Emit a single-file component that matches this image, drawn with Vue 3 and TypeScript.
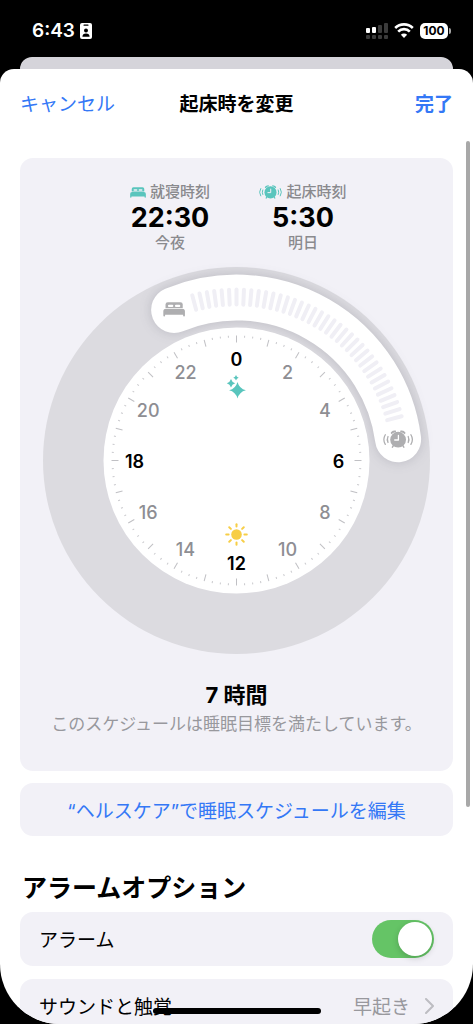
<script setup lang="ts">
import { ref } from 'vue'

interface Tick {
  angle: number
  major: boolean
}

interface HourLabel {
  text: string
  x: number
  y: number
  strong: boolean
}

interface SleepTime {
  icon: 'bed' | 'alarm'
  label: string
  time: string
  day: string
}

const alarmOn = ref(true)

const times: SleepTime[] = [
  { icon: 'bed', label: '就寝時刻', time: '22:30', day: '今夜' },
  { icon: 'alarm', label: '起床時刻', time: '5:30', day: '明日' },
]

const bandRadius = 163
const labelRadius = 102
const startHour = -1.5
const endHour = 5.5

function polar(hour: number, radius: number) {
  const rad = (hour / 24) * Math.PI * 2
  return { x: Math.sin(rad) * radius, y: -Math.cos(rad) * radius }
}

const start = polar(startHour, bandRadius)
const end = polar(endHour, bandRadius)
const bandPath = `M${start.x} ${start.y}A${bandRadius} ${bandRadius} 0 0 1 ${end.x} ${end.y}`

const ticks: Tick[] = Array.from({ length: 96 }, (_, i) => ({
  angle: i * 3.75,
  major: i % 4 === 0,
}))

const bandTicks: number[] = Array.from({ length: 37 }, (_, i) => -15 + i * 2.5)

const hours: HourLabel[] = Array.from({ length: 12 }, (_, i) => {
  const hour = i * 2
  return { text: String(hour), ...polar(hour, labelRadius), strong: hour % 6 === 0 }
})

const rays: number[] = [0, 45, 90, 135, 180, 225, 270, 315]
</script>

<template>
  <div class="screen">
    <svg class="defs" aria-hidden="true">
      <symbol id="bed" viewBox="0 0 22 15">
        <path
          fill="currentColor"
          d="M2.400 6.200V2.600Q2.400 .3 4.700 .3H17.300Q19.600 .3 19.600 2.600V6.200Z"
        />
        <path
          fill="var(--cut)"
          d="M5.900 2.900H9.100Q10.200 2.900 10.200 4Q10.200 5.100 9.100 5.100H5.900Q4.800 5.100 4.800 4Q4.800 2.900 5.900 2.900ZM12.900 2.900H16.100Q17.200 2.900 17.200 4Q17.200 5.100 16.100 5.100H12.900Q11.800 5.100 11.800 4Q11.800 2.900 12.900 2.900Z"
        />
        <path
          fill="currentColor"
          d="M2.800 6.900H19.200Q21.800 6.900 21.800 9.400V13.700Q21.800 14.600 20.900 14.600Q20 14.600 20 13.700V12.900H2V13.700Q2 14.600 1.100 14.600Q.2 14.600 .2 13.700V9.400Q.2 6.900 2.800 6.900Z"
        />
      </symbol>
      <symbol id="alarm" viewBox="0 0 30 18">
        <g fill="none" stroke="currentColor" stroke-linecap="round">
          <path stroke-width="1.900" d="M8.600 2.700Q9.900 1.100 12 1M21.400 2.700Q20.100 1.100 18 1" />
          <path stroke-width="1.500" d="M10.500 15.200L9.300 16.900M19.500 15.200L20.700 16.900" />
          <path stroke-width="1.300" d="M4.900 6.300Q3.500 9.300 4.900 12.300M25.100 6.300Q26.500 9.300 25.100 12.300" />
          <path stroke-width="1.300" d="M2.200 4.500Q-.8 9.300 2.200 14.100M27.800 4.500Q30.800 9.300 27.800 14.100" />
        </g>
        <circle cx="15" cy="9.500" r="7.900" fill="currentColor" />
        <path class="hands" d="M15.300 5.200V9.800H11.600" />
      </symbol>
    </svg>

    <header class="status">
      <span class="clock">6:43</span>
      <svg class="id" viewBox="0 0 12 16" aria-hidden="true">
        <rect width="12" height="16" rx="2" fill="#fff" />
        <rect x="3.5" y="1.6" width="5" height="1.1" rx=".5" fill="#000" />
        <circle cx="6" cy="7.6" r="2" fill="#000" />
        <path d="M2.4 13.8Q2.6 10.6 6 10.6T9.6 13.8Z" fill="#000" />
      </svg>
      <span class="spacer"></span>
      <svg class="signal" viewBox="0 0 22 16" aria-hidden="true">
        <g fill="#fff">
          <rect x="0" y="5" width="4" height="5" rx="1" />
          <rect x="6" y="4" width="4" height="6" rx="1" />
        </g>
        <g fill="#3b3b3b">
          <rect x="12" y="2" width="4" height="8" rx="1" />
          <rect x="18" y="0" width="4" height="10" rx="1" />
          <rect x="0" y="12" width="4" height="4" rx="1" />
          <rect x="6" y="12" width="4" height="4" rx="1" />
          <rect x="12" y="12" width="4" height="4" rx="1" />
          <rect x="18" y="12" width="4" height="4" rx="1" />
        </g>
      </svg>
      <svg class="wifi" viewBox="0 0 20 15" aria-hidden="true">
        <g fill="none" stroke="#fff" stroke-width="2.6">
          <path d="M1.200 5A12.600 12.600 0 0 1 18.800 5" />
          <path d="M4.200 8.600A8 8 0 0 1 15.800 8.600" />
        </g>
        <path fill="#fff" d="M10 15L6.900 11.800A4.400 4.400 0 0 1 13.100 11.800Z" />
      </svg>
      <span class="battery">100</span>
    </header>

    <div class="back-sheet"></div>

    <main class="sheet">
      <nav class="bar">
        <button class="link cancel" type="button">キャンセル</button>
        <h1>起床時を変更</h1>
        <button class="link done" type="button">完了</button>
      </nav>

      <section class="card schedule">
        <div class="times">
          <div v-for="t in times" :key="t.label" class="time">
            <div class="label">
              <svg :class="t.icon" aria-hidden="true"><use :href="'#' + t.icon" /></svg>
              <span>{{ t.label }}</span>
            </div>
            <strong>{{ t.time }}</strong>
            <span class="day">{{ t.day }}</span>
          </div>
        </div>

        <svg class="dial" viewBox="-193.5 -193.5 387 387" role="img" aria-label="22:30 – 5:30">
          <circle r="193.5" fill="#dcdbe0" />
          <path class="band" :d="bandPath" />
          <circle class="face" r="133" />
          <g class="band-ticks">
            <line
              v-for="a in bandTicks"
              :key="a"
              y1="-156"
              y2="-171"
              :transform="`rotate(${a})`"
            />
          </g>
          <g class="ticks">
            <line
              v-for="t in ticks"
              :key="t.angle"
              :class="{ major: t.major }"
              :y1="t.major ? -118 : -123"
              y2="-125"
              :transform="`rotate(${t.angle})`"
            />
          </g>
          <g class="hours">
            <text
              v-for="h in hours"
              :key="h.text"
              :class="{ strong: h.strong }"
              :x="h.x"
              :y="h.y"
              dy="7"
            >{{ h.text }}</text>
          </g>
          <g class="stars">
            <path d="M1 -78.500Q2.800 -71.800 9.400 -70.200Q2.800 -68.600 1 -61.900Q-.8 -68.600 -7.400 -70.200Q-.8 -71.800 1 -78.500Z" />
            <path d="M-5.500 -81.500Q-4.600 -78.200 -1.300 -77.300Q-4.600 -76.400 -5.500 -73.100Q-6.400 -76.400 -9.700 -77.300Q-6.400 -78.200 -5.500 -81.500Z" />
            <path d="M-.5 -85.500Q.1 -83.400 2.200 -82.800Q.1 -82.200 -.5 -80.100Q-1.100 -82.200 -3.200 -82.800Q-1.100 -83.400 -.5 -85.500Z" />
          </g>
          <g class="sun" transform="translate(0 74)">
            <circle r="5.300" />
            <line v-for="r in rays" :key="r" y1="-7.900" y2="-10.300" :transform="`rotate(${r})`" />
          </g>
          <svg class="grip" :x="start.x - 11" :y="start.y - 8" width="22" height="15">
            <use href="#bed" />
          </svg>
          <svg class="grip" :x="end.x - 15" :y="end.y - 9" width="30" height="18">
            <use href="#alarm" />
          </svg>
        </svg>

        <p class="total">7 時間</p>
        <p class="note">このスケジュールは睡眠目標を満たしています。</p>
      </section>

      <button class="card link edit" type="button">“ヘルスケア”で睡眠スケジュールを編集</button>

      <h2>アラームオプション</h2>

      <div class="card row">
        <label for="alarm-switch">アラーム</label>
        <input id="alarm-switch" v-model="alarmOn" type="checkbox" role="switch" />
      </div>

      <button class="card row" type="button">
        <span class="name">サウンドと触覚</span>
        <span class="value">
          <span class="name">早起き</span>
          <svg class="chevron" viewBox="0 0 9 16" aria-hidden="true">
            <path d="M1 1L8 8L1 15" />
          </svg>
        </span>
      </button>

      <span class="scrollbar"></span>
    </main>
    <span class="home"></span>
  </div>
</template>

<style>
html,
body {
  background: #000;
}
</style>

<style scoped>
.screen {
  position: relative;
  display: flex;
  flex-direction: column;
  height: 100vh;
  overflow: hidden;
  background: #000;
  border-radius: 0 0 60px 60px;
  color: #000;
  font-family: Inter, 'Noto Sans CJK JP', sans-serif;
  font-size: 19px;
  line-height: 28px;
}

.defs {
  position: absolute;
  width: 0;
  height: 0;
}

h1,
h2,
p {
  margin: 0;
}

button {
  border: 0;
  padding: 0;
  background: none;
  color: inherit;
  font: inherit;
  cursor: pointer;
}

.status {
  flex: none;
  display: flex;
  align-items: center;
  box-sizing: border-box;
  height: 57px;
  padding: 4px 22px 0 32px;
  color: #fff;
}

.clock {
  font-weight: 600;
}

.id {
  width: 12px;
  height: 16px;
  margin-left: 5px;
}

.spacer {
  flex: 1;
}

.signal {
  width: 22px;
  height: 16px;
}

.wifi {
  width: 20px;
  height: 15px;
  margin: 0 6px;
}

.battery {
  position: relative;
  width: 28px;
  height: 16px;
  margin-right: 3px;
  border-radius: 5px;
  background: #fff;
  color: #000;
  font-size: 12px;
  font-weight: 700;
  line-height: 16px;
  text-align: center;
}

.battery::after {
  content: '';
  position: absolute;
  top: 5px;
  right: -3px;
  width: 2px;
  height: 6px;
  border-radius: 0 2px 2px 0;
  background: #a5a5a5;
}

.back-sheet {
  flex: none;
  height: 12px;
  margin: 0 20px;
  border-radius: 12px 12px 0 0;
  background: #d5d4da;
}

.sheet {
  position: relative;
  flex: 1;
  min-height: 0;
  overflow: hidden;
  box-sizing: border-box;
  padding: 0 20px;
  border-radius: 14px 14px 0 0;
  background: #fff;
}

.bar {
  display: grid;
  grid-template-columns: 1fr auto 1fr;
  align-items: center;
  box-sizing: border-box;
  height: 72px;
  margin-bottom: 17px;
}

h1 {
  font-size: 19px;
  font-weight: 700;
}

.link {
  color: #3478f6;
}

.cancel {
  justify-self: start;
}

.done {
  justify-self: end;
  font-weight: 700;
}

.card {
  display: block;
  box-sizing: border-box;
  width: 100%;
  border-radius: 13px;
  background: #f2f1f7;
}

.schedule {
  padding: 22px 0 33px;
  text-align: center;
}

.times {
  display: grid;
  grid-template-columns: 133px 133px;
  justify-content: center;
}

.time {
  display: flex;
  flex-direction: column;
  align-items: center;
  color: #8a8a8e;
  font-size: 15px;
  font-weight: 500;
}

.label {
  display: flex;
  align-items: center;
  gap: 4px;
  line-height: 24px;
}

.label svg {
  --cut: #f2f1f7;
  color: #59c5bd;
}

.label .bed {
  width: 16px;
  height: 11px;
}

.label .alarm {
  width: 23px;
  height: 14px;
}

.time strong {
  color: #000;
  font-size: 27px;
  font-weight: 700;
  line-height: 28px;
}

.day {
  line-height: 22px;
}

.dial {
  display: block;
  width: 387px;
  max-width: 100%;
  margin: 13px auto 27px;
  overflow: visible;
}

.band {
  fill: none;
  stroke: #fff;
  stroke-width: 46px;
  stroke-linecap: round;
  filter: drop-shadow(0 0 6px rgba(60, 60, 80, 0.2));
}

.face {
  fill: #fff;
}

.band-ticks line {
  stroke: #f0eff5;
  stroke-width: 4px;
  stroke-linecap: round;
}

.ticks line {
  stroke: #c8c8cc;
  stroke-width: 1px;
}

.ticks .major {
  stroke: #c0c0c4;
}

.hours text {
  fill: #8e8e93;
  font-size: 18px;
  font-weight: 500;
  text-anchor: middle;
}

.hours .strong {
  fill: #000;
  font-weight: 600;
}

.stars {
  fill: #59c5bd;
}

.sun {
  fill: #f7ce46;
  stroke: #f7ce46;
  stroke-linecap: round;
}

.sun circle {
  stroke: none;
}

.sun line {
  stroke-width: 2px;
}

.grip {
  --cut: #fff;
  color: #aeaeb0;
}

.hands {
  fill: none;
  stroke: var(--cut);
  stroke-width: 1.3px;
  stroke-linecap: round;
  stroke-linejoin: round;
}

.total {
  font-size: 22px;
  font-weight: 700;
}

.note {
  margin-top: 1px;
  color: #98989d;
  font-size: 17px;
}

.edit {
  height: 53px;
  margin-top: 12px;
  padding-top: 4px;
}

h2 {
  margin: 36px 2px 8px;
  font-size: 25px;
  font-weight: 700;
  line-height: 32px;
}

.row {
  display: flex;
  align-items: center;
  justify-content: space-between;
  height: 54px;
  margin-bottom: 13px;
  padding: 0 19px;
}

.row label,
.row .name {
  padding-top: 4px;
}

.row input {
  appearance: none;
  position: relative;
  width: 62px;
  height: 38px;
  margin: 0;
  border-radius: 19px;
  background: #e0e0e4;
  cursor: pointer;
}

.row input:checked {
  background: #65c466;
}

.row input::before {
  content: '';
  position: absolute;
  top: 2px;
  left: 2px;
  width: 34px;
  height: 34px;
  border-radius: 50%;
  background: #fff;
  box-shadow: 0 2px 6px rgba(0, 0, 0, 0.18);
}

.row input:checked::before {
  left: 26px;
}

.value {
  display: flex;
  align-items: center;
  gap: 15px;
  color: #98989d;
}

.chevron {
  width: 9px;
  height: 16px;
}

.chevron path {
  fill: none;
  stroke: #bdbdc2;
  stroke-width: 2px;
  stroke-linecap: round;
  stroke-linejoin: round;
}

.scrollbar {
  position: absolute;
  top: 72px;
  right: 3px;
  width: 4px;
  height: 666px;
  border-radius: 2px;
  background: #a8a8a8;
}

.home {
  position: absolute;
  bottom: 10px;
  left: 50%;
  width: 168px;
  height: 6px;
  margin-left: -84px;
  border-radius: 3px;
  background: #000;
}
</style>
